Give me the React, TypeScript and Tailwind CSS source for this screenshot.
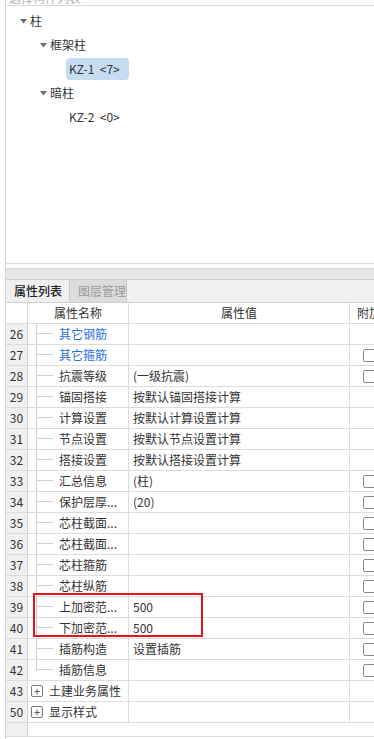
import React from 'react';

interface Row {
  n: number;
  name: string;
  value?: string;
  blue?: boolean;
  check?: boolean;
  plus?: boolean;
  last?: boolean;
}

const rows: Row[] = [
  { n: 26, name: '其它钢筋', blue: true },
  { n: 27, name: '其它箍筋', blue: true, check: true },
  { n: 28, name: '抗震等级', value: '(一级抗震)', check: true },
  { n: 29, name: '锚固搭接', value: '按默认锚固搭接计算' },
  { n: 30, name: '计算设置', value: '按默认计算设置计算' },
  { n: 31, name: '节点设置', value: '按默认节点设置计算' },
  { n: 32, name: '搭接设置', value: '按默认搭接设置计算' },
  { n: 33, name: '汇总信息', value: '(柱)', check: true },
  { n: 34, name: '保护层厚...', value: '(20)', check: true },
  { n: 35, name: '芯柱截面...', check: true },
  { n: 36, name: '芯柱截面...', check: true },
  { n: 37, name: '芯柱箍筋', check: true },
  { n: 38, name: '芯柱纵筋', check: true },
  { n: 39, name: '上加密范...', value: '500', check: true },
  { n: 40, name: '下加密范...', value: '500', check: true },
  { n: 41, name: '插筋构造', value: '设置插筋', check: true },
  { n: 42, name: '插筋信息', check: true, last: true },
  { n: 43, name: '土建业务属性', plus: true },
  { n: 50, name: '显示样式', plus: true },
];

const Caret = () => (
  <svg width="7" height="5" viewBox="0 0 7 5" className="shrink-0">
    <polygon points="0,0 7,0 3.5,4.5" fill="#6b6b6b" />
  </svg>
);

const PropRow: React.FC<{ row: Row }> = ({ row }) => (
  <div className="grid grid-cols-[22px_101px_221px_1fr] h-[21px] border-b border-[#dcdcdc]">
    <div className="bg-[#f0f0f0] border-r border-[#d4d4d4] flex items-center justify-center">{row.n}</div>
    <div className="border-r border-[#dcdcdc] flex items-stretch overflow-hidden">
      {row.plus ? (
        <>
          <div className="ml-[3px] self-center w-[12px] h-[12px] border border-[#7a7a7a] rounded-[2px] flex items-center justify-center text-[11px] leading-none text-[#444] shrink-0">+</div>
          <span className="ml-[6px] self-center whitespace-nowrap">{row.name}</span>
        </>
      ) : (
        <>
          <div className="w-[8px] shrink-0" />
          <div className="w-[17px] flex flex-col shrink-0">
            <div className="h-[10px] border-l border-b border-[#cfcfcf]" />
            <div className={row.last ? 'flex-1' : 'flex-1 border-l border-[#cfcfcf]'} />
          </div>
          <span className={`ml-[6px] self-center whitespace-nowrap ${row.blue ? 'text-[#1f6fe5]' : ''}`}>{row.name}</span>
        </>
      )}
    </div>
    <div className="border-r border-[#dcdcdc] flex items-center pl-[4px] whitespace-nowrap">{row.value}</div>
    <div className="flex items-center pl-[13px]">
      {row.check && <div className="w-[13px] h-[13px] border border-[#8a8a8a] rounded-[2px] bg-white" />}
    </div>
  </div>
);

export default function App() {
  return (
    <div
      className="relative w-[374px] h-[739px] bg-white overflow-hidden text-[12px] text-[#333]"
      style={{ fontFamily: '"Noto Sans CJK SC", "Noto Sans", sans-serif' }}
    >
      <div className="ml-[5px] h-full border-l border-[#d6d6d6] flex flex-col">
        {/* cut-off panel title */}
        <div className="h-[5px] overflow-hidden">
          <p className="-mt-[11px] pl-[3px] text-[#b0b0b0] whitespace-nowrap">选择构件列表</p>
        </div>

        {/* tree panel */}
        <div className="h-[259px] border-y border-[#dcdcdc] pt-[3px]">
          <div className="h-[24px] flex items-center pl-[14px] gap-[3px]">
            <Caret />
            <span>柱</span>
          </div>
          <div className="h-[24px] flex items-center pl-[34px] gap-[3px]">
            <Caret />
            <span>框架柱</span>
          </div>
          <div className="h-[24px] flex items-center pl-[60px]">
            <div className="h-[22px] w-[63px] rounded-[4px] bg-[#c5dcf3] flex items-center pl-[3px] whitespace-pre">KZ-1  &lt;7&gt;</div>
          </div>
          <div className="h-[24px] flex items-center pl-[34px] gap-[3px]">
            <Caret />
            <span>暗柱</span>
          </div>
          <div className="h-[24px] flex items-center pl-[63px] whitespace-pre">KZ-2  &lt;0&gt;</div>
        </div>

        <div className="h-[4px]" />

        {/* gray bar */}
        <div className="h-[11px] bg-[#e6e6e6] border-t border-[#d5d5d5]" />

        {/* tabs */}
        <div className="h-[24px] bg-[#f0f0f0] border-y border-[#cfcfcf] flex">
          <div className="w-[64px] border-r border-[#c8c8c8] flex items-center pl-[8px] font-medium text-[#222]">属性列表</div>
          <div className="w-[57px] bg-[#dcdcdc] border-r border-[#c8c8c8] flex items-center pl-[8px] text-[#9a9a9a]">图层管理</div>
        </div>

        {/* header */}
        <div className="grid grid-cols-[22px_101px_221px_1fr] h-[21px] border-b border-[#dcdcdc]">
          <div className="border-r border-[#dcdcdc]" />
          <div className="border-r border-[#dcdcdc] flex items-center justify-center">属性名称</div>
          <div className="border-r border-[#dcdcdc] flex items-center justify-center">属性值</div>
          <div className="flex items-center pl-[7px] whitespace-nowrap">附加</div>
        </div>

        {rows.map((r) => (
          <PropRow key={r.n} row={r} />
        ))}

        {/* filler */}
        <div className="grid grid-cols-[22px_1fr] h-[14px] border-b border-[#dcdcdc]">
          <div className="bg-[#f0f0f0] border-r border-[#d4d4d4]" />
          <div />
        </div>
      </div>

      {/* red highlight */}
      <div className="absolute left-[33px] top-[593px] w-[170px] h-[44px] border-2 border-[#e5141c]" />
    </div>
  );
}
